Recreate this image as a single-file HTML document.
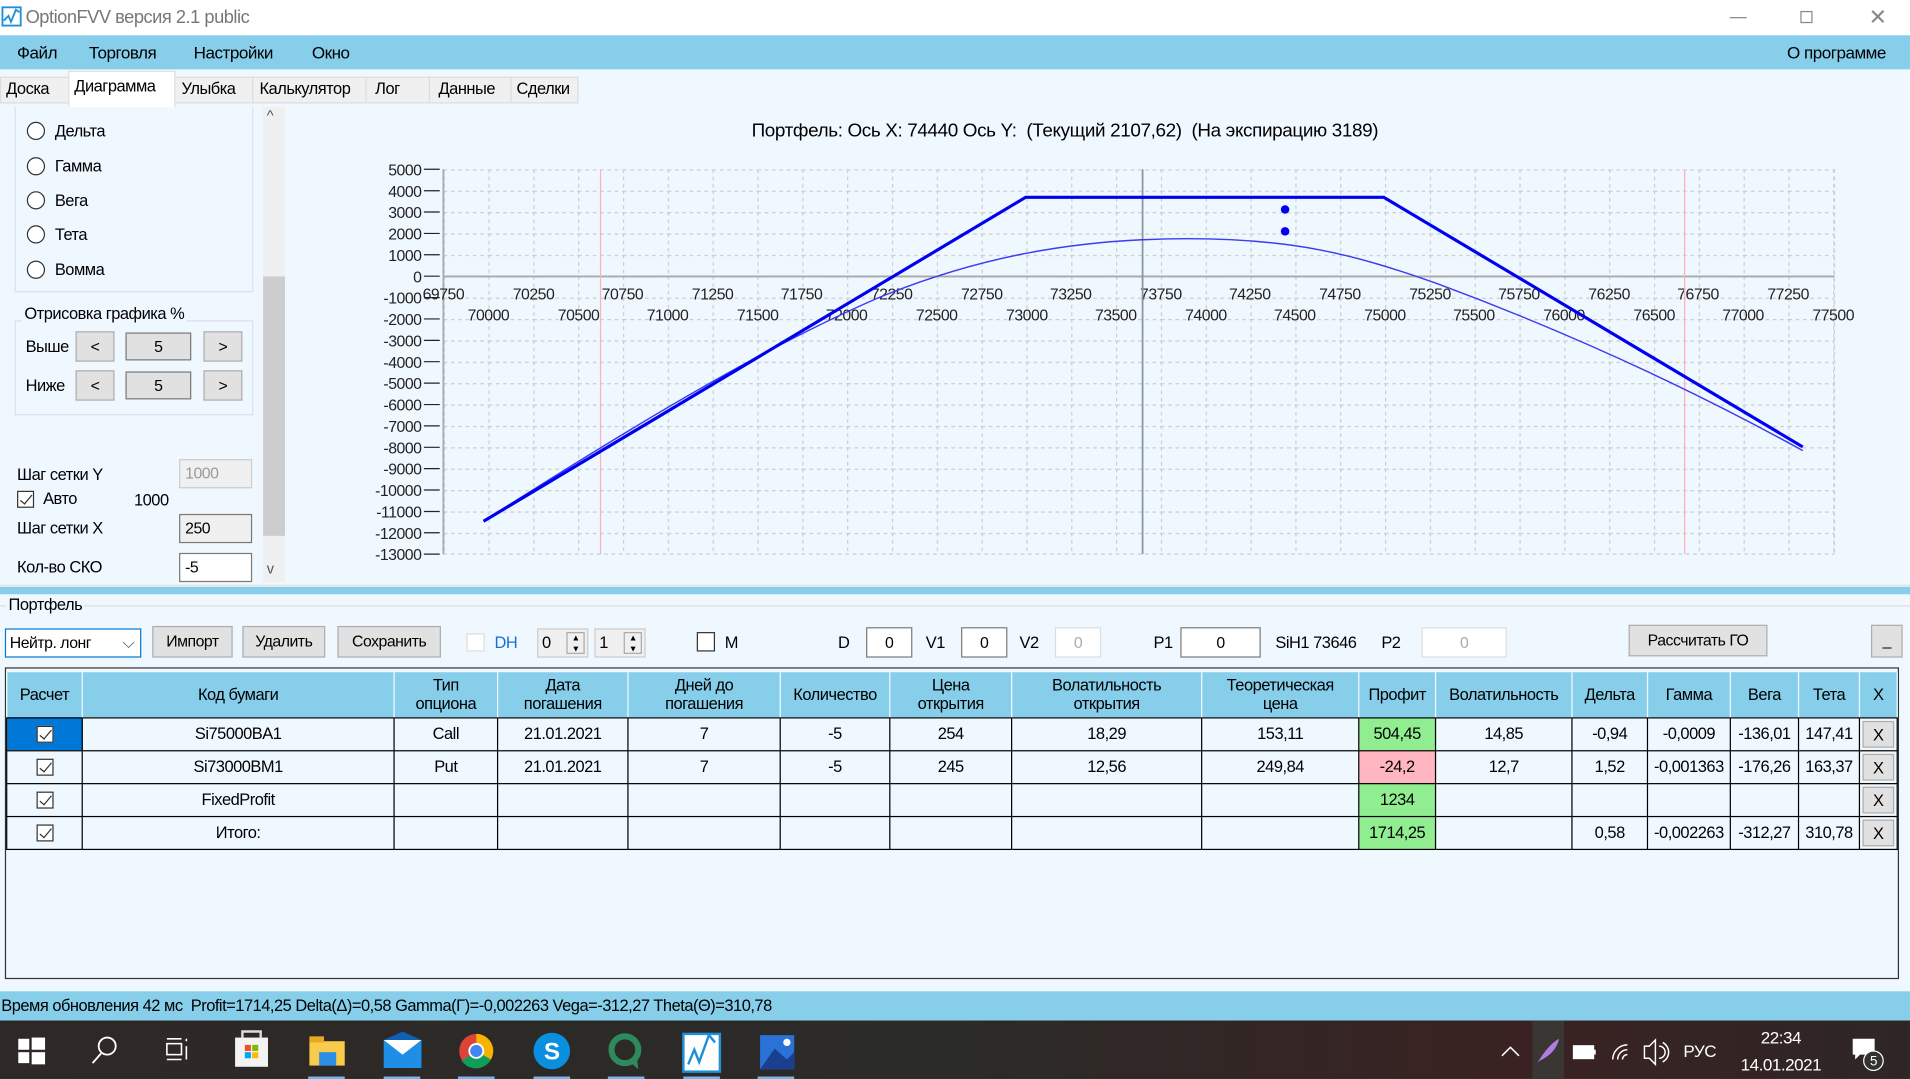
<!DOCTYPE html>
<html><head><meta charset="utf-8"><style>
*{box-sizing:border-box;margin:0;padding:0}
body{width:1910px;height:1079px;overflow:hidden;background:#f0f8ff;font-family:"Liberation Sans","Noto Sans CJK SC",sans-serif}
#s{position:absolute;left:0;top:0;width:1568px;height:886px;transform:scale(1.2181,1.2178);transform-origin:0 0;font-size:13.5px;color:#000;letter-spacing:-0.4px}
.a{position:absolute}
.btn{position:absolute;background:#e1e1e1;border:1px solid #adadad;text-align:center;font-size:13px}
.tb{position:absolute;background:#fff;border:1px solid #7a7a7a;text-align:center;font-size:13px}
table{border-collapse:collapse;position:absolute;left:5px;top:552px;table-layout:fixed}
td,th{border:1px solid #000;text-align:center;font-weight:normal;font-size:13.5px;height:27px;padding:0}
th{background:#87ceeb;height:37px;line-height:15px;border-color:#f0f8ff;border-bottom:1px solid #000;border-top:none}
.g{background:#90ee90}.r{background:#ffb6c1}
.cb{display:inline-block;width:14px;height:14px;border:1px solid #333;background:#fff;vertical-align:middle;position:relative}
.cb:after{content:"";position:absolute;left:4px;top:0px;width:4px;height:9px;border:solid #333;border-width:0 1.5px 1.5px 0;transform:rotate(40deg)}
.x{background:#e1e1e1;border:1px solid #adadad;display:inline-block;width:26px;height:22px;line-height:22px}
.rad{position:absolute;width:15px;height:15px;border:1.5px solid #333;border-radius:50%;background:#fff}
</style></head><body><div id="s">
<!-- title -->
<div class="a" style="left:0;top:0;width:1568px;height:29px;background:#fff"></div>
<svg class="a" style="left:1px;top:5px" width="17" height="17"><rect x="1" y="1" width="15" height="15" fill="#fff" stroke="#1e90d8" stroke-width="1.5"/><path d="M2 12 L6 8 L8 13 L12 3 L15 5" stroke="#1e90d8" stroke-width="1.5" fill="none"/></svg>
<div class="a" style="left:21px;top:6px;font-size:15px;color:#777">OptionFVV версия 2.1 public</div>
<div class="a" style="left:1420px;top:14px;width:14px;height:1px;background:#888"></div>
<div class="a" style="left:1478px;top:9px;width:10px;height:10px;border:1px solid #888"></div>
<div class="a" style="left:1534px;top:4px;font-size:18px;color:#888">✕</div>
<!-- menu -->
<div class="a" style="left:0;top:29px;width:1568px;height:28px;background:#87ceeb"></div>
<div class="a" style="left:14px;top:35px;font-size:14px">Файл</div>
<div class="a" style="left:73px;top:35px;font-size:14px">Торговля</div>
<div class="a" style="left:159px;top:35px;font-size:14px">Настройки</div>
<div class="a" style="left:256px;top:35px;font-size:14px">Окно</div>
<div class="a" style="left:1467px;top:35px;font-size:14px">О программе</div>
<!-- tabs -->
<div class="a" style="left:0;top:57px;width:1568px;height:30px;background:#f0f8ff"></div>
<div class="a" style="left:0;top:63px;width:475px;height:22px;background:#f0f0f0;border:1px solid #ddd"></div>
<div class="a" style="left:56px;top:58px;width:88px;height:30px;background:#fff;border:1px solid #ddd;border-bottom:none"></div>
<div class="a" style="left:5px;top:65px">Доска</div>
<div class="a" style="left:61px;top:63px">Диаграмма</div>
<div class="a" style="left:149px;top:65px">Улыбка</div>
<div class="a" style="left:213px;top:65px">Калькулятор</div>
<div class="a" style="left:308px;top:65px">Лог</div>
<div class="a" style="left:360px;top:65px">Данные</div>
<div class="a" style="left:424px;top:65px">Сделки</div>
<div class="a" style="left:207px;top:63px;width:1px;height:22px;background:#ddd"></div>
<div class="a" style="left:300px;top:63px;width:1px;height:22px;background:#ddd"></div>
<div class="a" style="left:352px;top:63px;width:1px;height:22px;background:#ddd"></div>
<div class="a" style="left:419px;top:63px;width:1px;height:22px;background:#ddd"></div>
<!-- left panel -->
<div class="a" style="left:12px;top:88px;width:196px;height:152px;border:1px solid #dde;border-top:none"></div>
<div class="rad" style="left:22px;top:100px"></div><div class="a" style="left:45px;top:100px">Дельта</div>
<div class="rad" style="left:22px;top:129px"></div><div class="a" style="left:45px;top:129px">Гамма</div>
<div class="rad" style="left:22px;top:157px"></div><div class="a" style="left:45px;top:157px">Вега</div>
<div class="rad" style="left:22px;top:185px"></div><div class="a" style="left:45px;top:185px">Тета</div>
<div class="rad" style="left:22px;top:214px"></div><div class="a" style="left:45px;top:214px">Вомма</div>
<div class="a" style="left:12px;top:263px;width:196px;height:78px;border:1px solid #dde"></div>
<div class="a" style="left:18px;top:250px;background:#f0f8ff;padding:0 2px">Отрисовка графика %</div>
<div class="a" style="left:21px;top:277px">Выше</div>
<div class="btn" style="left:62px;top:272px;width:32px;height:25px;line-height:23px">&lt;</div>
<div class="btn" style="left:103px;top:273px;width:54px;height:23px;line-height:21px;border-color:#7a7a7a">5</div>
<div class="btn" style="left:167px;top:272px;width:32px;height:25px;line-height:23px">&gt;</div>
<div class="a" style="left:21px;top:309px">Ниже</div>
<div class="btn" style="left:62px;top:304px;width:32px;height:25px;line-height:23px">&lt;</div>
<div class="btn" style="left:103px;top:305px;width:54px;height:23px;line-height:21px;border-color:#7a7a7a">5</div>
<div class="btn" style="left:167px;top:304px;width:32px;height:25px;line-height:23px">&gt;</div>
<div class="a" style="left:14px;top:382px">Шаг сетки Y</div>
<div class="tb" style="left:147px;top:377px;width:60px;height:24px;line-height:22px;text-align:left;padding-left:4px;color:#999;background:#f0f0f0;border-color:#ccc">1000</div>
<div class="a" style="left:14px;top:402px"><span class="cb"></span> <span style="margin-left:4px">Авто</span></div>
<div class="a" style="left:110px;top:403px">1000</div>
<div class="a" style="left:14px;top:426px">Шаг сетки X</div>
<div class="tb" style="left:147px;top:422px;width:60px;height:24px;line-height:22px;text-align:left;padding-left:4px;background:#f0f0f0">250</div>
<div class="a" style="left:14px;top:458px">Кол-во СКО</div>
<div class="tb" style="left:147px;top:454px;width:60px;height:24px;line-height:22px;text-align:left;padding-left:4px">-5</div>
<div class="a" style="left:216px;top:88px;width:18px;height:390px;background:#f0f0f0"></div>
<div class="a" style="left:216px;top:227px;width:18px;height:213px;background:#cdcdcd"></div>
<div class="a" style="left:219px;top:88px;font-size:12px;color:#555">^</div>
<div class="a" style="left:219px;top:460px;font-size:12px;color:#555">v</div>
<!-- chart -->
<div class="a" style="left:617px;top:99px;font-size:15.5px;letter-spacing:-0.3px">Портфель: Ось X: 74440 Ось Y:&nbsp; (Текущий 2107,62)&nbsp; (На экспирацию 3189)</div>
<svg class="a" style="left:0;top:0" width="1568" height="480" font-family="Liberation Sans" font-size="13" letter-spacing="-0.4">
<defs><pattern id="p" x="364.2" y="139" width="36.8" height="17.56" patternUnits="userSpaceOnUse">
<path d="M0.5 0V17.56M0 0.5H36.8" stroke="#ccc" stroke-dasharray="3,3" fill="none"/></pattern></defs>
<rect x="364" y="139" width="1142" height="316" fill="url(#p)"/>
<line x1="1506" y1="139" x2="1506" y2="455" stroke="#ccc" stroke-dasharray="3,3"/>
<line x1="364" y1="455" x2="1506" y2="455" stroke="#ccc" stroke-dasharray="3,3"/>
<line x1="364" y1="139" x2="364" y2="455" stroke="#aaa" stroke-width="1.5"/>
<line x1="364" y1="227" x2="1506" y2="227" stroke="#aaa" stroke-width="1.5"/>
<g stroke="#222">
<line x1="348" y1="139" x2="361" y2="139"/><line x1="348" y1="156.6" x2="361" y2="156.6"/><line x1="348" y1="174.1" x2="361" y2="174.1"/><line x1="348" y1="191.7" x2="361" y2="191.7"/><line x1="348" y1="209.2" x2="361" y2="209.2"/><line x1="348" y1="226.8" x2="361" y2="226.8"/><line x1="348" y1="244.4" x2="361" y2="244.4"/><line x1="348" y1="261.9" x2="361" y2="261.9"/><line x1="348" y1="279.5" x2="361" y2="279.5"/><line x1="348" y1="297" x2="361" y2="297"/><line x1="348" y1="314.6" x2="361" y2="314.6"/><line x1="348" y1="332.2" x2="361" y2="332.2"/><line x1="348" y1="349.7" x2="361" y2="349.7"/><line x1="348" y1="367.3" x2="361" y2="367.3"/><line x1="348" y1="384.8" x2="361" y2="384.8"/><line x1="348" y1="402.4" x2="361" y2="402.4"/><line x1="348" y1="420" x2="361" y2="420"/><line x1="348" y1="437.5" x2="361" y2="437.5"/><line x1="348" y1="455" x2="361" y2="455"/>
</g>
<g text-anchor="end" fill="#222">
<text x="346" y="144">5000</text><text x="346" y="161.6">4000</text><text x="346" y="179.1">3000</text><text x="346" y="196.7">2000</text><text x="346" y="214.2">1000</text><text x="346" y="231.8">0</text><text x="346" y="249.4">-1000</text><text x="346" y="266.9">-2000</text><text x="346" y="284.5">-3000</text><text x="346" y="302">-4000</text><text x="346" y="319.6">-5000</text><text x="346" y="337.2">-6000</text><text x="346" y="354.7">-7000</text><text x="346" y="372.3">-8000</text><text x="346" y="389.8">-9000</text><text x="346" y="407.4">-10000</text><text x="346" y="425">-11000</text><text x="346" y="442.5">-12000</text><text x="346" y="460">-13000</text>
</g>
<g text-anchor="middle" fill="#222">
<text x="364" y="246">69750</text><text x="438" y="246">70250</text><text x="511" y="246">70750</text><text x="585" y="246">71250</text><text x="658" y="246">71750</text><text x="732" y="246">72250</text><text x="806" y="246">72750</text><text x="879" y="246">73250</text><text x="953" y="246">73750</text><text x="1026" y="246">74250</text><text x="1100" y="246">74750</text><text x="1174" y="246">75250</text><text x="1247" y="246">75750</text><text x="1321" y="246">76250</text><text x="1394" y="246">76750</text><text x="1468" y="246">77250</text>
<text x="401" y="263">70000</text><text x="475" y="263">70500</text><text x="548" y="263">71000</text><text x="622" y="263">71500</text><text x="695" y="263">72000</text><text x="769" y="263">72500</text><text x="843" y="263">73000</text><text x="916" y="263">73500</text><text x="990" y="263">74000</text><text x="1063" y="263">74500</text><text x="1137" y="263">75000</text><text x="1210" y="263">75500</text><text x="1284" y="263">76000</text><text x="1358" y="263">76500</text><text x="1431" y="263">77000</text><text x="1505" y="263">77500</text>
</g>
<line x1="493" y1="139" x2="493" y2="455" stroke="#ffb0b8"/>
<line x1="1383" y1="139" x2="1383" y2="455" stroke="#ffb0b8"/>
<line x1="938" y1="139" x2="938" y2="455" stroke="#8a97a8" stroke-width="1.5"/>
<path d="M397 428 C550 330 640 280 720 245 C800 212 880 196 975 196 C1060 196 1110 208 1180 233 C1280 270 1380 315 1480 370" stroke="#3c3cf0" stroke-width="1.2" fill="none"/>
<polyline points="397,428 842,162 1136,162 1480,367" stroke="#0000f0" stroke-width="2.6" fill="none"/>
<circle cx="1055" cy="172" r="3.5" fill="#0000f0"/><circle cx="1055" cy="190" r="3.5" fill="#0000f0"/>
</svg>
<!-- divider -->
<div class="a" style="left:0;top:482px;width:1568px;height:6px;background:#87ceeb"></div>
<div class="a" style="left:0;top:480px;width:1568px;height:2px;background:#e6e6e6"></div>
<!-- portfolio -->
<div class="a" style="left:0;top:497px;width:1568px;height:1px;background:#ddd"></div>
<div class="a" style="left:5px;top:489px;background:#f0f8ff;padding:0 2px">Портфель</div>
<div class="tb" style="left:4px;top:516px;width:112px;height:24px;line-height:22px;text-align:left;padding-left:3px;border-color:#0078d7">Нейтр. лонг<span style="position:absolute;right:5px;color:#555">⌵</span></div>
<div class="btn" style="left:125px;top:514px;width:66px;height:26px;line-height:24px">Импорт</div>
<div class="btn" style="left:199px;top:514px;width:68px;height:26px;line-height:24px">Удалить</div>
<div class="btn" style="left:277px;top:514px;width:85px;height:26px;line-height:24px">Сохранить</div>
<div class="a" style="left:383px;top:520px;width:15px;height:15px;border:1px solid #ddd;background:#fff"></div>
<div class="a" style="left:406px;top:520px;color:#1a6fd1">DH</div>
<div class="a" style="left:441px;top:516px;width:42px;height:24px;border:1px solid #ccc;background:#f0f0f0;padding-left:3px;line-height:22px">0<span style="position:absolute;left:23px;top:2px;width:15px;height:18px;border:1px solid #aaa;font-size:7px;line-height:9px;text-align:center">▲<br>▼</span></div>
<div class="a" style="left:488px;top:516px;width:42px;height:24px;border:1px solid #ccc;background:#f0f0f0;padding-left:3px;line-height:22px">1<span style="position:absolute;left:23px;top:2px;width:15px;height:18px;border:1px solid #aaa;font-size:7px;line-height:9px;text-align:center">▲<br>▼</span></div>
<div class="a" style="left:572px;top:519px;width:15px;height:16px;border:1.5px solid #333;background:#fff"></div>
<div class="a" style="left:595px;top:520px">M</div>
<div class="a" style="left:688px;top:520px">D</div>
<div class="tb" style="left:711px;top:515px;width:38px;height:25px;line-height:23px">0</div>
<div class="a" style="left:760px;top:520px">V1</div>
<div class="tb" style="left:789px;top:515px;width:38px;height:25px;line-height:23px">0</div>
<div class="a" style="left:837px;top:520px">V2</div>
<div class="tb" style="left:866px;top:515px;width:38px;height:25px;line-height:23px;color:#aaa;border-color:#ddd">0</div>
<div class="a" style="left:947px;top:520px">P1</div>
<div class="tb" style="left:969px;top:515px;width:66px;height:25px;line-height:23px">0</div>
<div class="a" style="left:1047px;top:520px">SiH1 73646</div>
<div class="a" style="left:1134px;top:520px">P2</div>
<div class="tb" style="left:1167px;top:515px;width:70px;height:25px;line-height:23px;color:#aaa;border-color:#ddd">0</div>
<div class="btn" style="left:1337px;top:513px;width:114px;height:26px;line-height:24px">Рассчитать ГО</div>
<div class="btn" style="left:1536px;top:513px;width:26px;height:27px;line-height:24px">_</div>
<div class="a" style="left:4px;top:548px;width:1555px;height:256px;border:1.5px solid #333;background:#f0f8ff"></div>
<table>
<colgroup><col style="width:62px"><col style="width:256px"><col style="width:85px"><col style="width:107px"><col style="width:125px"><col style="width:90px"><col style="width:100px"><col style="width:156px"><col style="width:129px"><col style="width:63px"><col style="width:112px"><col style="width:62px"><col style="width:68px"><col style="width:56px"><col style="width:50px"><col style="width:31px"></colgroup>
<tr><th>Расчет</th><th>Код бумаги</th><th>Тип<br>опциона</th><th>Дата<br>погашения</th><th>Дней до<br>погашения</th><th>Количество</th><th>Цена<br>открытия</th><th>Волатильность<br>открытия</th><th>Теоретическая<br>цена</th><th>Профит</th><th>Волатильность</th><th>Дельта</th><th>Гамма</th><th>Вега</th><th>Тета</th><th>X</th></tr>
<tr><td style="background:#0078d7"><span class="cb"></span></td><td>Si75000BA1</td><td>Call</td><td>21.01.2021</td><td>7</td><td>-5</td><td>254</td><td>18,29</td><td>153,11</td><td class="g">504,45</td><td>14,85</td><td>-0,94</td><td>-0,0009</td><td>-136,01</td><td>147,41</td><td><span class="x">X</span></td></tr>
<tr><td><span class="cb"></span></td><td>Si73000BM1</td><td>Put</td><td>21.01.2021</td><td>7</td><td>-5</td><td>245</td><td>12,56</td><td>249,84</td><td class="r">-24,2</td><td>12,7</td><td>1,52</td><td>-0,001363</td><td>-176,26</td><td>163,37</td><td><span class="x">X</span></td></tr>
<tr><td><span class="cb"></span></td><td>FixedProfit</td><td></td><td></td><td></td><td></td><td></td><td></td><td></td><td class="g">1234</td><td></td><td></td><td></td><td></td><td></td><td><span class="x">X</span></td></tr>
<tr><td><span class="cb"></span></td><td>Итого:</td><td></td><td></td><td></td><td></td><td></td><td></td><td></td><td class="g">1714,25</td><td></td><td>0,58</td><td>-0,002263</td><td>-312,27</td><td>310,78</td><td><span class="x">X</span></td></tr>
</table>
<!-- status -->
<div class="a" style="left:0;top:814px;width:1568px;height:24px;background:#87ceeb;padding:4px 0 0 1px;font-size:13.5px">Время обновления 42 мс&nbsp; Profit=1714,25 Delta(Δ)=0,58 Gamma(Γ)=-0,002263 Vega=-312,27 Theta(Θ)=310,78</div>
<!-- taskbar -->
<div class="a" style="left:0;top:838px;width:1568px;height:48px;background:linear-gradient(90deg,#2e2826,#2b2b28 50%,#3a2222 80%,#2e2626)"></div>
<svg class="a" style="left:0;top:838px" width="1568" height="48">
<g fill="#fff"><rect x="15" y="15" width="9" height="9"/><rect x="26" y="14" width="11" height="10"/><rect x="15" y="26" width="9" height="9"/><rect x="26" y="26" width="11" height="10"/></g>
<circle cx="88" cy="21" r="7" stroke="#fff" stroke-width="1.5" fill="none"/><line x1="83" y1="27" x2="76" y2="35" stroke="#fff" stroke-width="1.5"/>
<g stroke="#fff" stroke-width="1.3" fill="none"><rect x="137" y="19" width="12" height="9"/><path d="M137 15h12M137 32h12M153 15v2M153 21v11"/></g>
<rect x="193" y="14" width="27" height="24" fill="#f3f3f3"/><path d="M199 14v-5h15v5" stroke="#ddd" stroke-width="2" fill="none"/>
<rect x="201" y="20" width="5" height="5" fill="#f25022"/><rect x="207" y="20" width="5" height="5" fill="#7fba00"/><rect x="201" y="26" width="5" height="5" fill="#00a4ef"/><rect x="207" y="26" width="5" height="5" fill="#ffb900"/>
<rect x="254" y="17" width="29" height="20" fill="#f8cc4a"/><rect x="254" y="13" width="12" height="5" fill="#e5a922"/><rect x="262" y="26" width="14" height="11" fill="#2d8ee6"/>
<rect x="315" y="16" width="31" height="23" fill="#1f8fe6"/><path d="M315 16l15.5 12 15.5-12z" fill="#fff"/><path d="M315 16l15.5-7 15.5 7" fill="#0f5fb3"/>
<circle cx="391" cy="25" r="14" fill="#db4437"/><path d="M391 25L403 32A14 14 0 0 1 379 33z" fill="#0f9d58"/><path d="M391 25L403 32A14 14 0 0 0 391 11z" fill="#f4b400"/><circle cx="391" cy="25" r="6.5" fill="#fff"/><circle cx="391" cy="25" r="5" fill="#4285f4"/>
<circle cx="453" cy="25" r="15" fill="#0a8fe0"/><text x="453" y="32" fill="#fff" font-size="20" font-weight="bold" text-anchor="middle" font-family="Liberation Sans">S</text>
<circle cx="513" cy="24" r="11" stroke="#2e8a5c" stroke-width="5" fill="none"/><path d="M516 33l8 7-1-9z" fill="#2e8a5c"/>
<rect x="561" y="11" width="30" height="31" fill="#fff" stroke="#1e90d8" stroke-width="2"/><path d="M565 36l5-12 4 10 8-22 5 6" stroke="#1e90d8" stroke-width="2" fill="none"/>
<rect x="624" y="12" width="28" height="28" fill="#2b72d6"/><path d="M624 40l12-17 10 9 6-6v14z" fill="#1a3f8e"/><circle cx="646" cy="18" r="3" fill="#fff"/>
<g fill="#76b9ed"><rect x="253" y="46" width="30" height="2"/><rect x="315" y="46" width="30" height="2"/><rect x="376" y="46" width="30" height="2"/><rect x="438" y="46" width="30" height="2"/><rect x="499" y="46" width="30" height="2"/><rect x="561" y="46" width="30" height="2"/><rect x="622" y="46" width="30" height="2"/></g>
<path d="M1233 29l7-7 7 7" stroke="#fff" stroke-width="1.3" fill="none"/>
<rect x="1258" y="0" width="26" height="48" fill="#3a3633"/><path d="M1262 35c6-10 12-17 18-20-2 8-7 14-16 18" fill="#b07ee0"/>
<rect x="1292" y="21" width="16" height="10" stroke="#fff" stroke-width="1.5" fill="#fff"/><rect x="1308" y="24" width="2" height="4" fill="#fff"/>
<path d="M1324 32a12 12 0 0 1 12-12M1328 32a8 8 0 0 1 8-8M1332 32a4 4 0 0 1 4-4" stroke="#fff" stroke-width="1.2" fill="none"/>
<path d="M1350 21h4l5-5v20l-5-5h-4z" stroke="#fff" stroke-width="1.2" fill="none"/><path d="M1362 21a5 5 0 0 1 0 10M1365 18a9 9 0 0 1 0 16" stroke="#fff" stroke-width="1.2" fill="none"/>
<text x="1382" y="30" fill="#fff" font-size="14" font-family="Liberation Sans">РУС</text>
<text x="1462" y="19" fill="#fff" font-size="14" text-anchor="middle" font-family="Liberation Sans">22:34</text>
<text x="1462" y="41" fill="#fff" font-size="14" text-anchor="middle" font-family="Liberation Sans">14.01.2021</text>
<path d="M1521 15h18v13h-12l-4 4v-4h-2z" fill="#fff"/><circle cx="1538" cy="33" r="8" fill="#333" stroke="#fff"/><text x="1538" y="37" fill="#fff" font-size="11" text-anchor="middle" font-family="Liberation Sans">5</text>
</svg>
</div></body></html>
